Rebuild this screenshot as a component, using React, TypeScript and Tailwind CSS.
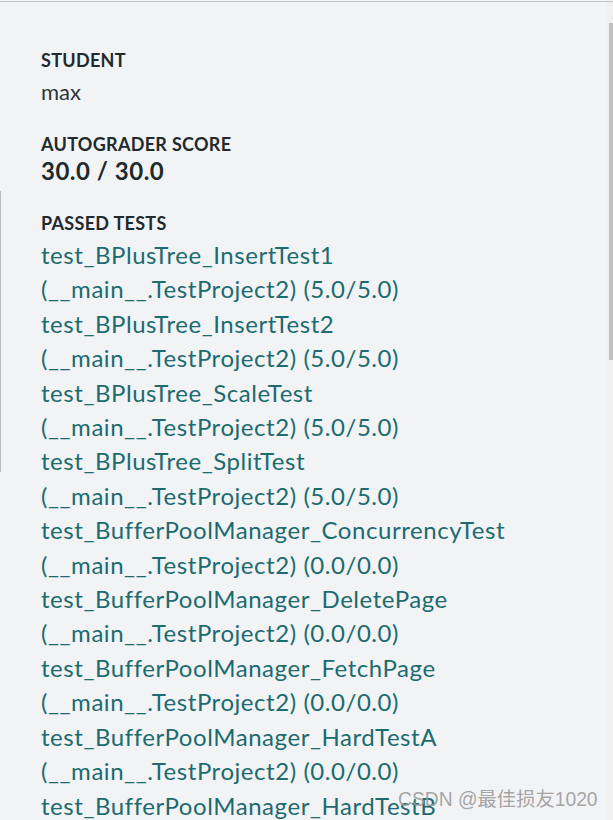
import React from "react";

const tests: [string, string][] = [
  ["test_BPlusTree_InsertTest1", "(5.0/5.0)"],
  ["test_BPlusTree_InsertTest2", "(5.0/5.0)"],
  ["test_BPlusTree_ScaleTest", "(5.0/5.0)"],
  ["test_BPlusTree_SplitTest", "(5.0/5.0)"],
  ["test_BufferPoolManager_ConcurrencyTest", "(0.0/0.0)"],
  ["test_BufferPoolManager_DeletePage", "(0.0/0.0)"],
  ["test_BufferPoolManager_FetchPage", "(0.0/0.0)"],
  ["test_BufferPoolManager_HardTestA", "(0.0/0.0)"],
  ["test_BufferPoolManager_HardTestB", "(0.0/0.0)"],
];

function Label({ children }: { children: React.ReactNode }) {
  return (
    <div className="text-[18px] leading-[22px] font-bold text-[#1e2a2e] tracking-[0.3px]">
      {children}
    </div>
  );
}

export default function App() {
  return (
    <div
      className="relative w-[613px] h-[820px] overflow-hidden bg-[#f2f3f5] pt-px"
      style={{ fontFamily: "Lato, 'Noto Sans', sans-serif" }}
    >
      <div className="h-full border-t border-[#c4c5c7]">
        <div className="flex flex-col gap-[27px] pl-[41px] pt-[47px]">
          <section className="flex flex-col gap-[7px]">
            <Label>STUDENT</Label>
            <div className="text-[22px] leading-[28px] text-[#2f3537]">max</div>
          </section>

          <section className="flex flex-col gap-[2px]">
            <Label>AUTOGRADER SCORE</Label>
            <div className="text-[24px] leading-[28px] font-bold text-[#1e2a2e] tracking-[0.5px]">
              30.0 / 30.0
            </div>
          </section>

          <section className="flex flex-col gap-[4px]">
            <Label>PASSED TESTS</Label>
            <ul className="flex flex-col text-[24px] leading-[34.4px] text-[#1b6b70] tracking-[0.55px]">
              {tests.map(([name, score]) => (
                <li key={name} className="flex flex-col">
                  <span className="whitespace-nowrap">{name}</span>
                  <span className="whitespace-nowrap">(__main__.TestProject2) {score}</span>
                </li>
              ))}
            </ul>
          </section>
        </div>
      </div>

      {/* left edge line */}
      <div className="absolute left-0 top-[191px] h-[281px] w-px bg-[#bdbdbd]" />

      {/* scrollbar */}
      <div className="absolute right-0 top-[2px] h-[818px] w-[6px] bg-[#f0f0f0]" />
      <div className="absolute right-0 top-[23px] h-[337px] w-[4px] bg-[#c1c1c1]" />

      {/* watermark */}
      <div
        className="absolute left-[398px] top-[787px] text-[19.3px] leading-[26px] text-[#9a9a9a]/90 whitespace-nowrap"
        style={{ fontFamily: "'Liberation Sans', 'Noto Sans CJK SC', sans-serif" }}
      >
        CSDN @最佳损友1020
      </div>
    </div>
  );
}
